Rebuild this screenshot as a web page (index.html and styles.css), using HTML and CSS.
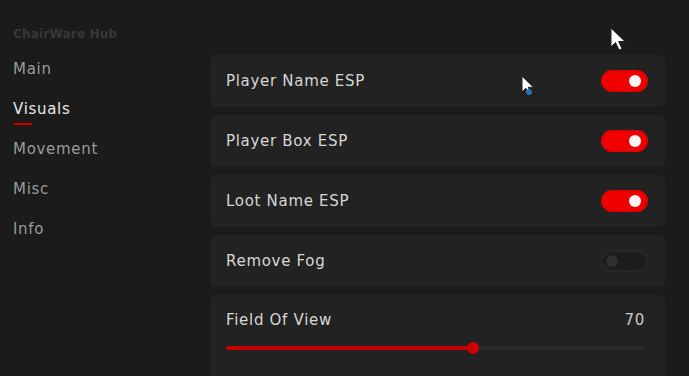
FILE: index.html
```html
<!DOCTYPE html>
<html lang="en">
<head>
    <meta charset="UTF-8">
    <title>ChairWare Hub</title>
    <link rel="stylesheet" href="styles.css">
</head>
<body>
    <div class="window">
        <div class="sidebar">
            <div class="hub-title">ChairWare Hub</div>
            <div class="nav-item">Main</div>
            <div class="nav-item active">Visuals</div>
            <div class="nav-item">Movement</div>
            <div class="nav-item">Misc</div>
            <div class="nav-item">Info</div>
        </div>

        <div class="content">
            <div class="card">
                <span class="label">Player Name ESP</span>
                <div class="toggle on"><div class="knob"></div></div>
            </div>
            <div class="card">
                <span class="label">Player Box ESP</span>
                <div class="toggle on"><div class="knob"></div></div>
            </div>
            <div class="card">
                <span class="label">Loot Name ESP</span>
                <div class="toggle on"><div class="knob"></div></div>
            </div>
            <div class="card">
                <span class="label">Remove Fog</span>
                <div class="toggle"><div class="knob"></div></div>
            </div>
            <div class="card slider-card">
                <div class="slider-head">
                    <span class="label">Field Of View</span>
                    <span class="value">70</span>
                </div>
                <div class="track">
                    <div class="fill" style="width: 59%;"></div>
                    <div class="thumb" style="left: 59%;"></div>
                </div>
            </div>
        </div>
    </div>

    <!-- mouse cursors captured in the screenshot -->
    <svg class="cursor cursor-top" width="18" height="26" viewBox="0 0 18 26">
        <path d="M1 1 L1 20 L5.5 15.5 L9 23 L12 21.7 L8.6 14.5 L15 14.5 Z" fill="#fff" stroke="#222" stroke-width="1"/>
    </svg>
    <svg class="cursor cursor-mid" width="16" height="22" viewBox="0 0 16 22">
        <path d="M1 1 L1 17 L4.8 13.2 L7.8 19.5 L10.2 18.4 L7.3 12.3 L12.5 12.3 Z" fill="#fff" stroke="#222" stroke-width="1"/>
        <circle cx="8" cy="17" r="3" fill="#1e73be"/>
    </svg>
</body>
</html>
```

FILE: styles.css
```css
body {
    margin: 0;
    background: #1b1b1b;
    font-family: "DejaVu Sans", "Liberation Sans", sans-serif;
    overflow: hidden;
}
.window {
    display: flex;
    height: 376px;
}
.sidebar {
    width: 210px;
    flex-shrink: 0;
    padding: 27px 0 0 13px;
    box-sizing: border-box;
}
.hub-title {
    font-size: 12px;
    font-weight: 700;
    letter-spacing: 0.2px;
    color: #383838;
    margin-bottom: 18px;
}
.nav-item {
    font-size: 15px;
    letter-spacing: 0.7px;
    color: #9a9a9a;
    height: 40px;
    line-height: 20px;
    position: relative;
}
.nav-item.active {
    color: #e8e8e8;
}
.nav-item.active::after {
    content: "";
    position: absolute;
    left: 1px;
    top: 24px;
    width: 18px;
    height: 2px;
    background: #d10000;
}
.content {
    width: 455px;
    flex-shrink: 0;
    padding-top: 55px;
    display: flex;
    flex-direction: column;
    gap: 8px;
}
.card {
    flex-shrink: 0;
    background: #222222;
    border-radius: 5px;
    height: 52px;
    padding: 0 17px 0 16px;
    display: flex;
    align-items: center;
    justify-content: space-between;
}
.label {
    font-size: 15px;
    letter-spacing: 0.7px;
    color: #d6d6d6;
}
.toggle {
    width: 47px;
    height: 22px;
    border-radius: 11px;
    background: #1c1c1c;
    border: 2px solid #272727;
    box-sizing: border-box;
    position: relative;
}
.toggle .knob {
    position: absolute;
    top: 3px;
    left: 3px;
    width: 12px;
    height: 12px;
    border-radius: 50%;
    background: #2f2f2f;
}
.toggle.on {
    background: #f00000;
    border-color: #e40000;
}
.toggle.on .knob {
    left: auto;
    right: 5px;
    background: #f4f4f4;
}
.slider-card {
    height: 74px;
    flex-direction: column;
    align-items: stretch;
    justify-content: flex-start;
    padding-top: 16px;
    padding-right: 20px;
}
.slider-head {
    display: flex;
    justify-content: space-between;
}
.value {
    font-size: 15px;
    letter-spacing: 0.7px;
    color: #c8c8c8;
}
.track {
    position: relative;
    height: 4px;
    margin-top: 17px;
    border-radius: 2px;
    background: #2a2a2a;
}
.fill {
    height: 4px;
    border-radius: 2px;
    background: #c40000;
}
.thumb {
    position: absolute;
    top: -4px;
    width: 12px;
    height: 12px;
    margin-left: -6px;
    border-radius: 50%;
    background: #d00000;
}
.cursor {
    position: absolute;
}
.cursor-top {
    left: 610px;
    top: 27px;
}
.cursor-mid {
    left: 521px;
    top: 75px;
}
```
